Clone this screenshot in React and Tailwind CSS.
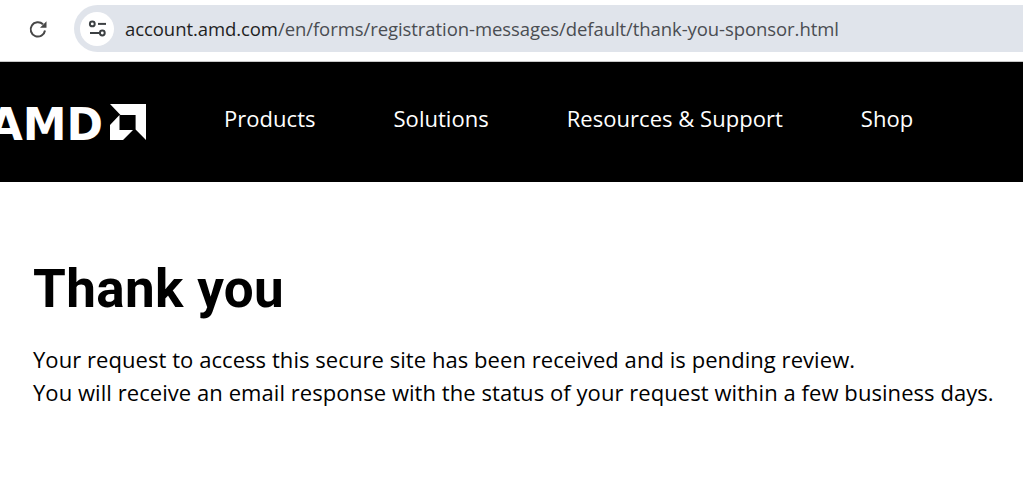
const NAV = ['Products', 'Solutions', 'Resources & Support', 'Shop']

function SiteInfoIcon() {
  return (
    <svg width="20" height="20" viewBox="0 0 20 20" fill="none" stroke="#3c4043" strokeWidth="2">
      <circle cx="5.300" cy="4.900" r="2.400" />
      <path d="M11 4.900h8" />
      <path d="M3 14h9.500" />
      <circle cx="15.300" cy="14" r="2.400" />
    </svg>
  )
}

function ReloadIcon() {
  return (
    <svg width="20" height="20" viewBox="0 0 20 20" fill="none" stroke="#474747" strokeWidth="2">
      <path d="M17 11.500A7.200 7.200 0 1 1 15 5.300" />
      <path d="M18.500 2.200V8.700H12Z" strokeWidth="0" fill="#474747" />
    </svg>
  )
}

function AmdArrow() {
  return (
    <svg className="shrink-0" width="36" height="36" viewBox="0 0 36 36" fill="#fff">
      <path d="M0 0H36V36L25.600 25.600V11H10.500Z" />
      <path d="M9.500 11L0 21V36H13L23 26H9.500Z" />
    </svg>
  )
}

export default function App() {
  return (
    <div className="w-[1023px] h-[504px] overflow-hidden bg-white font-['Open_Sans',sans-serif]">
      <div className="h-[61px] flex items-start pt-[5px] pl-[28px]">
        <div className="w-[20px] h-[47px] flex items-center justify-center">
          <ReloadIcon />
        </div>
        <div className="ml-[26px] h-[47px] flex-1 flex items-center bg-[#e0e4eb] rounded-l-[24px] pl-[6px]">
          <div className="w-[34px] h-[34px] rounded-full bg-white flex items-center justify-center">
            <SiteInfoIcon />
          </div>
          <span className="ml-[11px] text-[18.500px] text-[#4a4d52] tracking-[-0.070px]">
            <span className="text-[#1f1f1f]">account.amd.com</span>/en/forms/registration-messages/default/thank-you-sponsor.html
          </span>
        </div>
      </div>

      <div className="h-px bg-[#c8c8c8]" />

      <nav className="h-[120px] bg-black flex items-start pt-[41px] text-white overflow-hidden">
        <div className="w-[146px] mt-[1px] shrink-0 flex items-end justify-end gap-[7px]">
          <span className="shrink-0 font-['DejaVu_Sans',sans-serif] font-bold text-[44px] leading-[30px] whitespace-nowrap">AMD</span>
          <AmdArrow />
        </div>
        <div className="ml-[78px] flex gap-[78px] text-[22px] leading-[30px] tracking-[0.030px]">
          {NAV.map(item => <span key={item}>{item}</span>)}
        </div>
      </nav>

      <main className="px-[33px] pt-[72px] text-black">
        <h1 className="font-['Roboto',sans-serif] font-bold text-[53px] leading-[70px] tracking-[0.350px]">Thank you</h1>
        <p className="mt-[19px] text-[22px] leading-[33px] tracking-[0.060px] whitespace-nowrap">
          Your request to access this secure site has been received and is pending review.<br />
          You will receive an email response with the status of your request within a few business days.
        </p>
      </main>
    </div>
  )
}
